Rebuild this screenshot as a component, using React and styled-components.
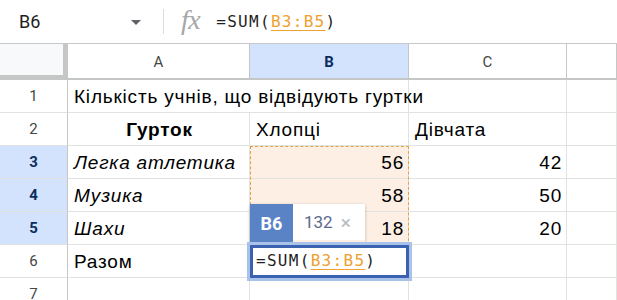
import React from "react";
import styled, { createGlobalStyle, css } from "styled-components";

const Global = createGlobalStyle`
  html, body { margin: 0; padding: 0; background: #fff; overflow: hidden; }
  body { width: 617px; height: 300px; font-family: "Liberation Sans", Arial, sans-serif; }
`;

const Page = styled.div`
  width: 617px;
  height: 300px;
  overflow: hidden;
  display: flex;
  flex-direction: column;
`;

const FormulaBar = styled.div`
  height: 43px;
  flex: 0 0 43px;
  border-bottom: 1px solid #c7c9cc;
  display: flex;
  align-items: center;
  box-sizing: content-box;
`;

const NameBox = styled.div`
  width: 143px;
  padding-left: 19px;
  display: flex;
  align-items: center;
  justify-content: space-between;
  box-sizing: border-box;
  font-family: Roboto, "Liberation Sans", sans-serif;
  font-size: 18px;
  color: #1f1f1f;
  padding-right: 2px;
`;

const Caret = styled.span`
  width: 0;
  height: 0;
  border-left: 5px solid transparent;
  border-right: 5px solid transparent;
  border-top: 5px solid #5f6368;
  margin-top: 1px;
`;

const Divider = styled.div`
  width: 1px;
  height: 25px;
  background: #dadce0;
  margin-left: 20px;
`;

const Fx = styled.span`
  font-family: "Liberation Serif", "DejaVu Serif", serif;
  font-style: italic;
  font-size: 28px;
  color: #a5a7aa;
  margin-left: 17px;
  letter-spacing: -0.5px;
  margin-top: -4px;
`;

const FormulaText = styled.span`
  font-family: "DejaVu Sans Mono", "Liberation Mono", monospace;
  font-size: 16px;
  letter-spacing: 1.3px;
  color: #1f1f1f;
  margin-left: 16px;
  white-space: nowrap;
`;

const Ref = styled.span`
  color: #f0a030;
  text-decoration: underline;
  text-underline-offset: 3px;
  text-decoration-thickness: 1px;
`;

const Sheet = styled.div`
  position: relative;
  flex: 1;
  display: grid;
  grid-template-columns: 68px 182px 159px 158px 1fr;
  grid-template-rows: 36px repeat(7, 33px);
`;

const Corner = styled.div`
  background: #f8f9fa;
  box-shadow: inset -5px -5px 0 #c4c7c5;
`;

const ColHead = styled.div`
  display: flex;
  align-items: center;
  justify-content: center;
  font-family: Roboto, "Liberation Sans", sans-serif;
  font-size: 15px;
  color: #444746;
  border-right: 1px solid #c4c7c5;
  border-bottom: 2px solid #c4c7c5;
  box-sizing: border-box;
  padding-top: 2px;
  ${(p) =>
    p.$active &&
    css`
      background: #d3e3fd;
      color: #0b2d5c;
      font-weight: 700;
    `}
`;

const RowHead = styled.div`
  display: flex;
  align-items: center;
  justify-content: center;
  font-family: Roboto, "Liberation Sans", sans-serif;
  font-size: 15px;
  color: #444746;
  border-right: 1px solid #c4c7c5;
  border-bottom: 1px solid #e1e3e1;
  box-sizing: border-box;
  ${(p) =>
    p.$active &&
    css`
      background: #d3e3fd;
      color: #0b2d5c;
      font-weight: 700;
    `}
`;

const Cell = styled.div`
  display: flex;
  align-items: center;
  padding: 2px 4px 0 6px;
  box-sizing: border-box;
  font-size: 19px;
  letter-spacing: 0.8px;
  color: #000;
  white-space: nowrap;
  overflow: visible;
  border-right: 1px solid #e1e3e1;
  border-bottom: 1px solid #e1e3e1;
  grid-column: ${(p) => (p.$span ? `span ${p.$span}` : "auto")};
  justify-content: ${(p) =>
    p.$align === "right" ? "flex-end" : p.$align === "center" ? "center" : "flex-start"};
  font-weight: ${(p) => (p.$bold ? 700 : 400)};
  font-style: ${(p) => (p.$italic ? "italic" : "normal")};
  background: ${(p) => (p.$range ? "#fdefe3" : "transparent")};
`;

const RangeBox = styled.div`
  position: absolute;
  left: 250px;
  top: 102px;
  width: 159px;
  height: 100px;
  box-sizing: border-box;
  border: 1px dashed #dfa244;
  pointer-events: none;
`;

const Tip = styled.div`
  position: absolute;
  left: 250px;
  top: 160px;
  display: flex;
  height: 38px;
  box-shadow: 0 1px 3px rgba(0, 0, 0, 0.25);
`;

const TipRef = styled.div`
  width: 43px;
  background: #5a83c6;
  color: #fff;
  font-family: Roboto, "Liberation Sans", sans-serif;
  font-weight: 700;
  font-size: 18px;
  display: flex;
  align-items: center;
  justify-content: center;
`;

const TipValue = styled.div`
  width: 72px;
  height: 36px;
  background: #fff;
  display: flex;
  align-items: center;
  gap: 8px;
  padding-left: 11px;
  box-sizing: border-box;
  font-family: Roboto, "Liberation Sans", sans-serif;
  font-size: 17px;
  color: #5b6a8c;
`;

const Close = styled.span`
  color: #b8bcc2;
  font-size: 19px;
`;

const Editor = styled.div`
  position: absolute;
  left: 247px;
  top: 198px;
  width: 165px;
  height: 39px;
  box-sizing: border-box;
  border: 3px solid #a9c2ea;
  background: #fff;
`;

const EditorInner = styled.div`
  height: 100%;
  box-sizing: border-box;
  border: 3px solid #3a62b0;
  display: flex;
  align-items: center;
  padding-left: 3px;
  padding-bottom: 2px;
`;

const EditorText = styled(FormulaText)`
  margin-left: 0;
`;

const rows = [
  { n: 1, cells: [{ t: "Кількість учнів, що відвідують гуртки", span: 2 }, {}, {}] },
  { n: 2, cells: [{ t: "Гурток", bold: true, align: "center" }, { t: "Хлопці" }, { t: "Дівчата" }, {}] },
  { n: 3, active: true, cells: [{ t: "Легка атлетика", italic: true }, { t: "56", align: "right", range: true }, { t: "42", align: "right" }, {}] },
  { n: 4, active: true, cells: [{ t: "Музика", italic: true }, { t: "58", align: "right", range: true }, { t: "50", align: "right" }, {}] },
  { n: 5, active: true, cells: [{ t: "Шахи", italic: true }, { t: "18", align: "right", range: true }, { t: "20", align: "right" }, {}] },
  { n: 6, cells: [{ t: "Разом" }, {}, {}, {}] },
  { n: 7, cells: [{}, {}, {}, {}] },
];

const Formula = ({ as: Comp = FormulaText }) => (
  <Comp>
    =SUM(<Ref>B3:B5</Ref>)
  </Comp>
);

export default function App() {
  return (
    <Page>
      <Global />
      <FormulaBar>
        <NameBox>
          <span>B6</span>
          <Caret />
        </NameBox>
        <Divider />
        <Fx>fx</Fx>
        <Formula />
      </FormulaBar>
      <Sheet>
        <Corner />
        <ColHead>A</ColHead>
        <ColHead $active>B</ColHead>
        <ColHead>C</ColHead>
        <ColHead />
        {rows.map((r) => (
          <React.Fragment key={r.n}>
            <RowHead $active={r.active}>{r.n}</RowHead>
            {r.cells.map((c, i) => (
              <Cell
                key={i}
                $span={c.span}
                $align={c.align}
                $bold={c.bold}
                $italic={c.italic}
                $range={c.range}
              >
                {c.t}
              </Cell>
            ))}
          </React.Fragment>
        ))}
        <RangeBox />
        <Tip>
          <TipRef>B6</TipRef>
          <TipValue>
            <span>132</span>
            <Close>×</Close>
          </TipValue>
        </Tip>
        <Editor>
          <EditorInner>
            <Formula as={EditorText} />
          </EditorInner>
        </Editor>
      </Sheet>
    </Page>
  );
}
